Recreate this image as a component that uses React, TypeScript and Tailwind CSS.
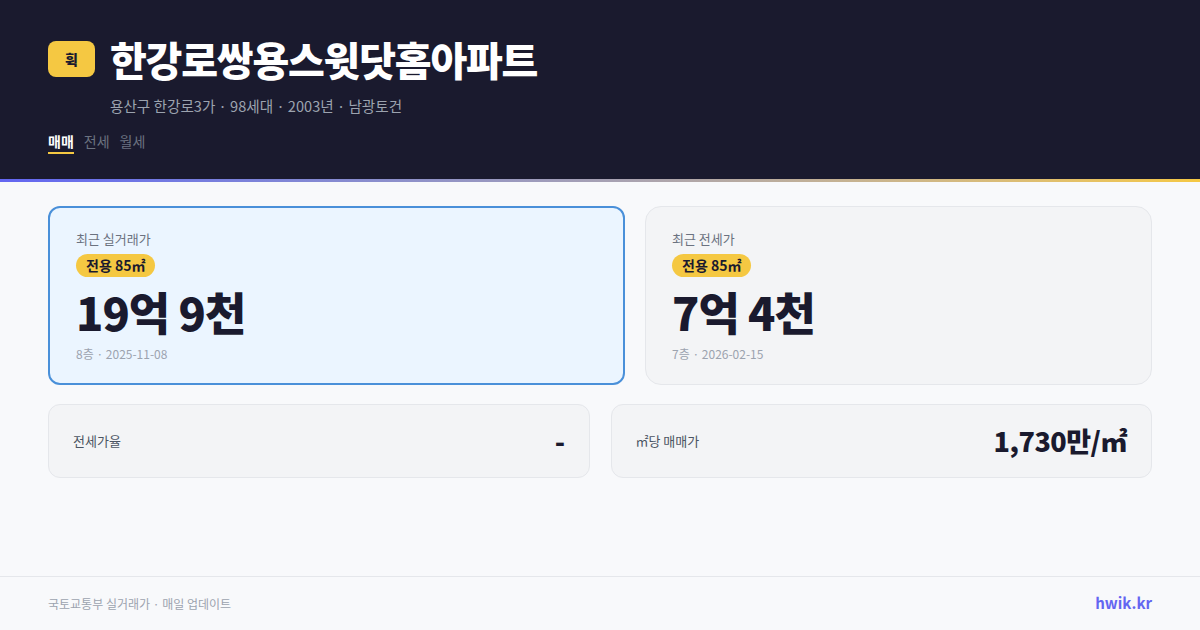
import React from 'react';

const FONT = { fontFamily: '"Noto Sans CJK KR", "Noto Sans", sans-serif' };

const TABS = ['매매', '전세', '월세'];

function PriceCard({ label, price, meta, active }: { label: string; price: string; meta: string; active?: boolean }) {
  return (
    <div
      className={`flex flex-col px-[26px] rounded-2xl ${
        active ? 'bg-[#ebf5ff] border-2 border-[#4a90d9] rounded-xl pt-[23px] pb-[21px]' : 'bg-[#f3f4f6] border border-[#e5e7eb] pt-[24px] pb-[22px]'
      }`}
    >
      <div className="text-[13px] leading-[16px] text-[#6b7280]">{label}</div>
      <div className="mt-[7px] flex">
        <span className="bg-[#f5c842] text-[#1a1a2e] text-[14px] font-bold leading-[23px] px-[10px] rounded-full">
          전용 85㎡
        </span>
      </div>
      <div className="mt-[11px] text-[45px] leading-[48px] font-black tracking-[-1px] text-[#1a1a2e]">{price}</div>
      <div className="mt-[10px] text-[12px] leading-[16px] text-[#9ca3af]">{meta}</div>
    </div>
  );
}

function StatCard({ label, value }: { label: string; value: string }) {
  return (
    <div className="flex items-center justify-between h-[74px] px-6 bg-[#f3f4f6] border border-[#e5e7eb] rounded-xl">
      <span className="text-[13px] text-[#4b5563]">{label}</span>
      <span className="text-[27px] font-black text-[#1a1a2e] tracking-[-0.5px]">{value}</span>
    </div>
  );
}

export default function App() {
  return (
    <div style={FONT} className="w-[1200px] h-[630px] bg-[#f8f9fb] flex flex-col overflow-hidden">
      {/* HEADER */}
      <div className="bg-[#1a1a2e] h-[179px] px-12 pt-[39px]">
        <div className="flex items-center gap-[15px]">
          <div className="w-[47px] h-[36px] rounded-lg bg-[#f5c842] flex items-center justify-center text-[14px] font-black text-[#1a1a2e]">
            휙
          </div>
          <h1 className="text-[40px] leading-[40px] font-black text-white tracking-[-1.2px]">한강로쌍용스윗닷홈아파트</h1>
        </div>
        <div className="ml-[62px] mt-[17px] text-[14.6px] leading-[20px] text-[#9ca3af]">
          용산구 한강로3가 · 98세대 · 2003년 · 남광토건
        </div>
        <div className="flex gap-[10px] mt-[15px]">
          {TABS.map((t, i) => (
            <div
              key={t}
              className={`text-[14px] leading-[20px] pb-[1px] ${
                i === 0 ? 'text-white font-bold border-b-2 border-[#f5c842]' : 'text-[#6b7280]'
              }`}
            >
              {t}
            </div>
          ))}
        </div>
      </div>
      <div className="h-[3px] bg-gradient-to-r from-[#6366f1] to-[#f5c842]" />

      {/* CARDS */}
      <div className="flex-1 px-12 pt-[24px]">
        <div className="grid grid-cols-[577px_1fr] gap-5">
          <PriceCard label="최근 실거래가" price="19억 9천" meta="8층 · 2025-11-08" active />
          <PriceCard label="최근 전세가" price="7억 4천" meta="7층 · 2026-02-15" />
        </div>
        <div className="grid grid-cols-2 gap-[21px] mt-[19px]">
          <StatCard label="전세가율" value="-" />
          <StatCard label="㎡당 매매가" value="1,730만/㎡" />
        </div>
      </div>

      {/* FOOTER */}
      <div className="h-[54px] border-t border-[#e5e7eb] px-12 flex items-center justify-between">
        <span className="text-[12px] text-[#9ca3af]">국토교통부 실거래가 · 매일 업데이트</span>
        <span className="text-[15px] font-bold text-[#6366f1]">hwik.kr</span>
      </div>
    </div>
  );
}
